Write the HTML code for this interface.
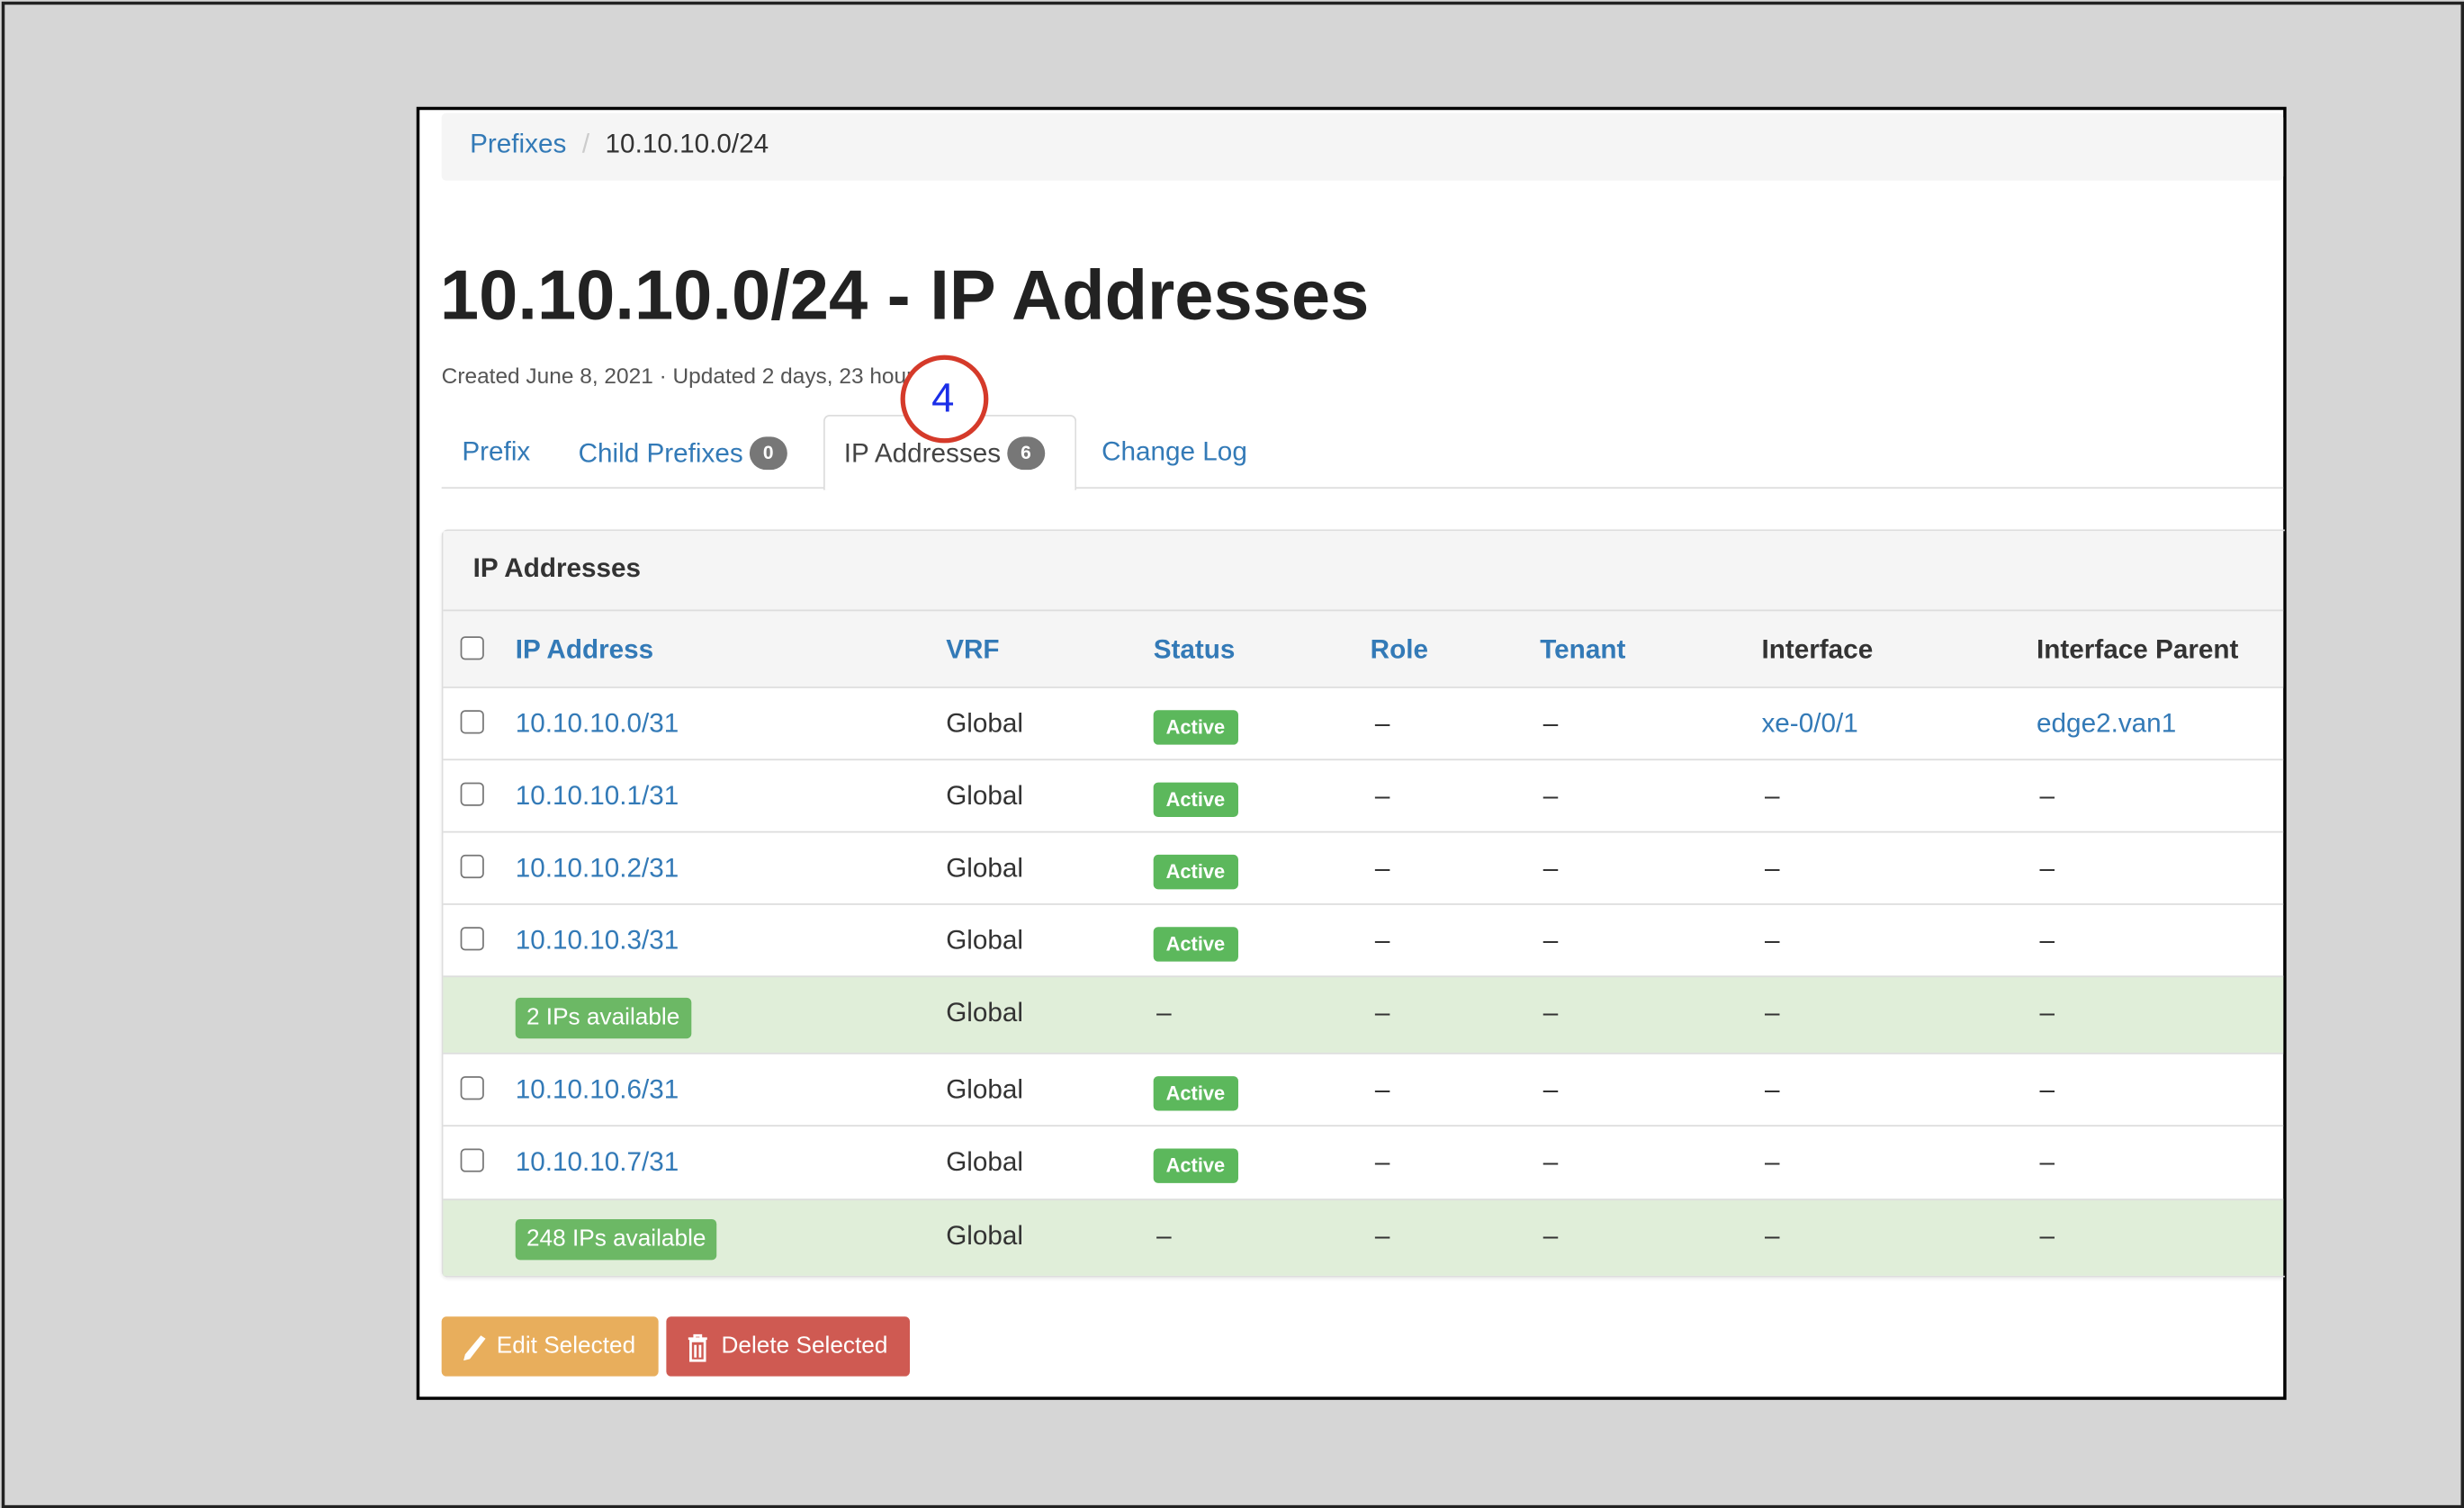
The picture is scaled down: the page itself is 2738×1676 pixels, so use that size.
<!DOCTYPE html>
<html><head><meta charset="utf-8"><style>
html,body{margin:0;padding:0;width:2738px;height:1676px;overflow:hidden;background:#d6d6d6}
#s{position:absolute;left:0;top:0;width:1568px;height:960px;transform:scale(1.74617);transform-origin:0 0;font-family:"Liberation Sans",Arial,sans-serif;color:#333}
.a{position:absolute;white-space:nowrap}
.l{color:#337ab7}
.row{position:absolute;left:282px;width:1171px;border-top:1px solid #ddd}
.cb{position:absolute;left:11px;width:13px;height:13px;border:1px solid #777;border-radius:3px;background:#fff}
.t{position:absolute;font-size:17px;line-height:20px}
.act{position:absolute;left:452px;background:#5cb85c;color:#fff;font-weight:bold;font-size:12.5px;line-height:22px;padding:0 8px;border-radius:3px}
.av{position:absolute;left:46px;background:#6cb865;color:#fff;font-size:15px;line-height:26px;padding:0 7px;border-radius:3px}
.badge{display:inline-block;background:#777;color:#fff;font-size:12px;font-weight:bold;border-radius:11px;width:24px;height:21px;line-height:21px;text-align:center;vertical-align:2px;margin-left:4px}
</style></head><body><div id="s">
<div class="a" style="left:1px;top:1px;width:1563px;height:955px;border:2px solid #222"></div>
<div class="a" style="left:265px;top:68px;width:1186px;height:819px;border:2px solid #000;background:#fff"></div>
<div class="a" style="left:281px;top:72px;width:1172px;height:43px;background:#f5f5f5;border-radius:3px"></div>
<div class="a" style="left:299px;top:82px;font-size:17px"><span class="l">Prefixes</span><span style="color:#ccc;margin:0 10px">/</span><span style="color:#333">10.10.10.0/24</span></div>
<div class="a" style="left:280px;top:164px;font-size:44.5px;font-weight:bold;color:#222">10.10.10.0/24 - IP Addresses</div>
<div class="a" style="left:281px;top:231px;font-size:14px;color:#555">Created June 8, 2021 · Updated 2 days, 23 hours ago</div>
<div class="a" style="left:281px;top:310px;width:1172px;border-top:1px solid #ddd"></div>
<div class="a" style="left:524px;top:264px;width:159px;height:47px;border:1px solid #ddd;border-bottom:none;background:#fff;border-radius:4px 4px 0 0"></div>
<div class="a l" style="left:294px;top:278px;font-size:17px">Prefix</div>
<div class="a l" style="left:368px;top:278px;font-size:17px">Child Prefixes<span class="badge">0</span></div>
<div class="a" style="left:537px;top:278px;font-size:17px;color:#444">IP Addresses<span class="badge">6</span></div>
<div class="a l" style="left:701px;top:278px;font-size:17px">Change Log</div>
<div class="a" style="left:573px;top:226px;width:50px;height:50px;border:3px solid #d53a2a;border-radius:50%;background:#fff"></div>
<div class="a" style="left:572px;top:238px;width:56px;text-align:center;font-size:26px;color:#1a2ee8">4</div>
<div class="a" style="left:281px;top:337px;width:1172px;height:474px;border:1px solid #ddd;border-right:none;border-radius:4px 0 0 4px;box-shadow:0 1px 2px rgba(0,0,0,.08)"></div>
<div class="a" style="left:282px;top:338px;width:1171px;height:99px;background:#f5f5f5"></div>
<div class="a" style="left:301px;top:352px;font-size:17px;font-weight:bold;color:#333">IP Addresses</div>
<div class="row" style="top:388px;height:49px">
<div class="cb" style="top:16px"></div>
<div class="t l" style="left:46px;top:15px;font-weight:bold">IP Address</div>
<div class="t l" style="left:320px;top:15px;font-weight:bold">VRF</div>
<div class="t l" style="left:452px;top:15px;font-weight:bold">Status</div>
<div class="t l" style="left:590px;top:15px;font-weight:bold">Role</div>
<div class="t l" style="left:698px;top:15px;font-weight:bold">Tenant</div>
<div class="t" style="left:839px;top:15px;font-weight:bold">Interface</div>
<div class="t" style="left:1014px;top:15px;font-weight:bold">Interface Parent</div>
</div>
<div class="row" style="top:437px;height:45px"><div class="cb" style="top:14px"></div><div class="t l" style="left:46px;top:13px">10.10.10.0/31</div><div class="t" style="left:320px;top:13px">Global</div><div class="act" style="top:14px">Active</div><div class="t" style="left:593px;top:13px">–</div><div class="t" style="left:700px;top:13px">–</div><div class="t l" style="left:839px;top:13px">xe-0/0/1</div><div class="t l" style="left:1014px;top:13px">edge2.van1</div></div>
<div class="row" style="top:483px;height:45px"><div class="cb" style="top:14px"></div><div class="t l" style="left:46px;top:13px">10.10.10.1/31</div><div class="t" style="left:320px;top:13px">Global</div><div class="act" style="top:14px">Active</div><div class="t" style="left:593px;top:13px">–</div><div class="t" style="left:700px;top:13px">–</div><div class="t" style="left:841px;top:13px">–</div><div class="t" style="left:1016px;top:13px">–</div></div>
<div class="row" style="top:529px;height:45px"><div class="cb" style="top:14px"></div><div class="t l" style="left:46px;top:13px">10.10.10.2/31</div><div class="t" style="left:320px;top:13px">Global</div><div class="act" style="top:14px">Active</div><div class="t" style="left:593px;top:13px">–</div><div class="t" style="left:700px;top:13px">–</div><div class="t" style="left:841px;top:13px">–</div><div class="t" style="left:1016px;top:13px">–</div></div>
<div class="row" style="top:575px;height:45px"><div class="cb" style="top:14px"></div><div class="t l" style="left:46px;top:13px">10.10.10.3/31</div><div class="t" style="left:320px;top:13px">Global</div><div class="act" style="top:14px">Active</div><div class="t" style="left:593px;top:13px">–</div><div class="t" style="left:700px;top:13px">–</div><div class="t" style="left:841px;top:13px">–</div><div class="t" style="left:1016px;top:13px">–</div></div>
<div class="row" style="top:621px;height:48px;background:#e0eed9"><div class="av" style="top:13px">2 IPs available</div><div class="t" style="left:320px;top:13px">Global</div><div class="t" style="left:454px;top:13px">–</div><div class="t" style="left:593px;top:13px">–</div><div class="t" style="left:700px;top:13px">–</div><div class="t" style="left:841px;top:13px">–</div><div class="t" style="left:1016px;top:13px">–</div></div>
<div class="row" style="top:670px;height:45px"><div class="cb" style="top:14px"></div><div class="t l" style="left:46px;top:13px">10.10.10.6/31</div><div class="t" style="left:320px;top:13px">Global</div><div class="act" style="top:14px">Active</div><div class="t" style="left:593px;top:13px">–</div><div class="t" style="left:700px;top:13px">–</div><div class="t" style="left:841px;top:13px">–</div><div class="t" style="left:1016px;top:13px">–</div></div>
<div class="row" style="top:716px;height:46px"><div class="cb" style="top:14px"></div><div class="t l" style="left:46px;top:13px">10.10.10.7/31</div><div class="t" style="left:320px;top:13px">Global</div><div class="act" style="top:14px">Active</div><div class="t" style="left:593px;top:13px">–</div><div class="t" style="left:700px;top:13px">–</div><div class="t" style="left:841px;top:13px">–</div><div class="t" style="left:1016px;top:13px">–</div></div>
<div class="row" style="top:763px;height:48px;background:#e0eed9"><div class="av" style="top:12px">248 IPs available</div><div class="t" style="left:320px;top:13px">Global</div><div class="t" style="left:454px;top:13px">–</div><div class="t" style="left:593px;top:13px">–</div><div class="t" style="left:700px;top:13px">–</div><div class="t" style="left:841px;top:13px">–</div><div class="t" style="left:1016px;top:13px">–</div></div>
<div class="a" style="left:281px;top:838px;width:138px;height:38px;background:#e8ae5c;border-radius:3px;color:#fff;font-size:15px;line-height:38px">
<svg style="position:absolute;left:13px;top:11px" width="16" height="18" viewBox="0 0 16 18"><path d="M12 1 L15 3 L5 16 L1 17 L2 13 Z" fill="#fff"/></svg><span style="position:absolute;left:35px">Edit Selected</span></div>
<div class="a" style="left:424px;top:838px;width:155px;height:38px;background:#cf5a52;border-radius:3px;color:#fff;font-size:15px;line-height:38px">
<svg style="position:absolute;left:13px;top:11px" width="14" height="18" viewBox="0 0 14 18"><path d="M1 3h12M5 3V1h4v2M2.5 4.5h9V17h-9Z M5.5 7v8M8.5 7v8" stroke="#fff" stroke-width="1.6" fill="none"/></svg><span style="position:absolute;left:35px">Delete Selected</span></div>
</div></body></html>
